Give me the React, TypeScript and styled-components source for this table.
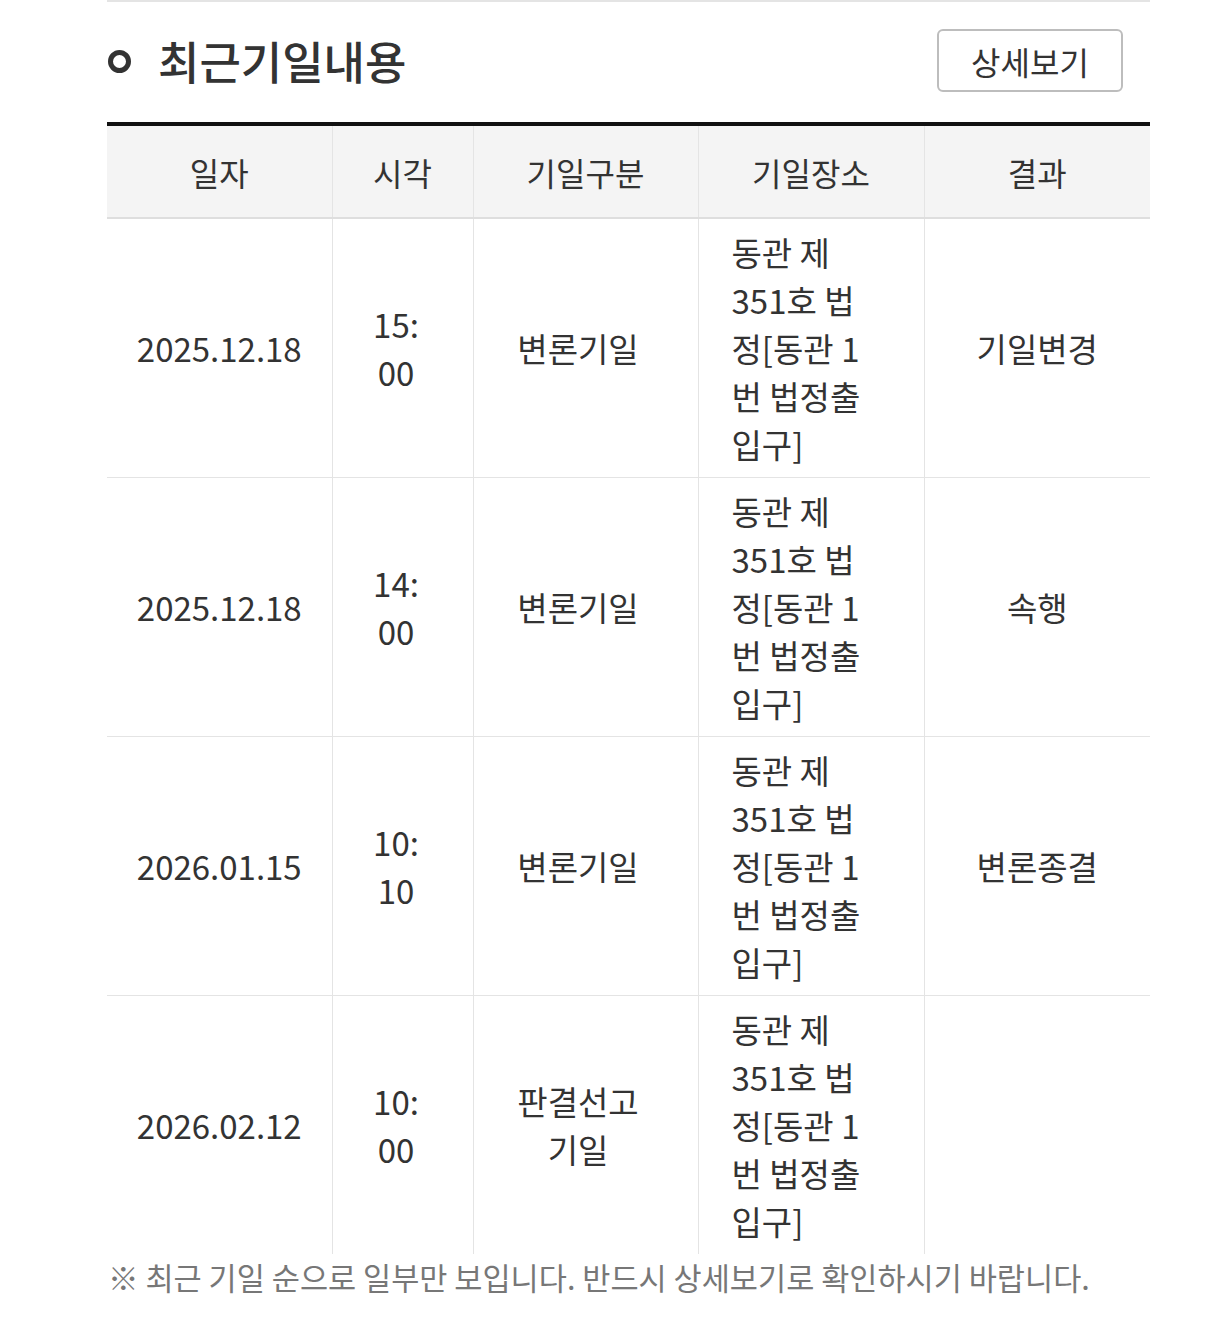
import React from "react";
import styled, { createGlobalStyle } from "styled-components";

const Global = createGlobalStyle`
  html, body { margin: 0; padding: 0; background: #fff; }
  body { font-family: "Noto Sans CJK KR", "Noto Sans", sans-serif; color: #333; }
`;

const Page = styled.div`
  width: 1043px;
  margin-left: 107px;
`;

const TopRule = styled.div`
  height: 2px;
  background: #e4e4e4;
`;

const Header = styled.div`
  display: flex;
  align-items: center;
  justify-content: space-between;
  padding: 27px 27px 30px 0;
`;

const Title = styled.h2`
  display: flex;
  align-items: center;
  gap: 27px;
  margin: 0;
  font-size: 45px;
  line-height: 56px;
  font-weight: 500;
  color: #333;
  letter-spacing: 0;
`;

const Bullet = styled.span`
  width: 13px;
  height: 13px;
  border: 5px solid #333;
  border-radius: 50%;
  margin-left: 1px;
  margin-top: 2px;
`;

const DetailButton = styled.button`
  width: 186px;
  height: 63px;
  border: 2px solid #bdbdbd;
  border-radius: 6px;
  background: #fff;
  font-family: inherit;
  font-size: 32px;
  color: #333;
  cursor: pointer;
`;

const Table = styled.table`
  width: 1043px;
  table-layout: fixed;
  border-collapse: collapse;
  border-top: 4px solid #111;
`;

const Th = styled.th`
  height: 91px;
  padding: 0;
  background: #f4f4f4;
  font-size: 32px;
  font-weight: 400;
  color: #333;
  border-bottom: 2px solid #dedede;
  border-left: 1px solid #e4e4e4;
  &:first-child { border-left: none; }
`;

const Td = styled.td<{ $pl?: number; $pr?: number; $align?: string; $breakAll?: boolean }>`
  padding: 9px ${(p) => p.$pr ?? 10}px 9px ${(p) => p.$pl ?? 10}px;
  font-size: 33px;
  line-height: 48px;
  color: #333;
  text-align: ${(p) => p.$align ?? "center"};
  vertical-align: middle;
  word-break: ${(p) => (p.$breakAll ? "break-all" : "normal")};
  border-left: 1px solid #e4e4e4;
  &:first-child { border-left: none; }
`;

const Tr = styled.tr<{ $last?: boolean }>`
  border-bottom: ${(p) => (p.$last ? "none" : "1px solid #e4e4e4")};
`;

const Note = styled.p`
  margin: 3px 0 0 1px;
  font-size: 30.6px;
  line-height: 40px;
  color: #777;
`;

const rows = [
  { date: "2025.12.18", time: "15:00", kind: "변론기일", result: "기일변경" },
  { date: "2025.12.18", time: "14:00", kind: "변론기일", result: "속행" },
  { date: "2026.01.15", time: "10:10", kind: "변론기일", result: "변론종결" },
  { date: "2026.02.12", time: "10:00", kind: "판결선고 기일", result: "" },
];

const place = "동관 제 351호 법정[동관 1번 법정출입구]";

export default function App() {
  return (
    <>
      <Global />
      <Page>
        <TopRule />
        <Header>
          <Title>
            <Bullet />
            최근기일내용
          </Title>
          <DetailButton>상세보기</DetailButton>
        </Header>
        <Table>
          <colgroup>
            <col style={{ width: 225 }} />
            <col style={{ width: 141 }} />
            <col style={{ width: 225 }} />
            <col style={{ width: 226 }} />
            <col style={{ width: 226 }} />
          </colgroup>
          <thead>
            <tr>
              <Th>일자</Th>
              <Th>시각</Th>
              <Th>기일구분</Th>
              <Th>기일장소</Th>
              <Th>결과</Th>
            </tr>
          </thead>
          <tbody>
            {rows.map((r, i) => (
              <Tr key={i} $last={i === rows.length - 1}>
                <Td>{r.date}</Td>
                <Td $pl={36} $pr={49} $breakAll>{r.time}</Td>
                <Td $pl={30} $pr={45}>{r.kind}</Td>
                <Td $pl={33} $pr={50} $align="left">{place}</Td>
                <Td>{r.result}</Td>
              </Tr>
            ))}
          </tbody>
        </Table>
        <Note>※ 최근 기일 순으로 일부만 보입니다. 반드시 상세보기로 확인하시기 바랍니다.</Note>
      </Page>
    </>
  );
}
